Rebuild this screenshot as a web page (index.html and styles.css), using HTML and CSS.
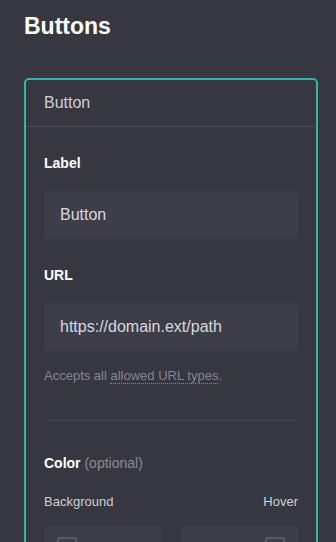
FILE: index.html
```html
<!doctype html>
<html lang="en">
<head>
    <meta charset="UTF-8">
    <meta name="viewport" content="width=device-width, initial-scale=1.0">
    <title>Buttons</title>
    <link rel="stylesheet" href="styles.css">
</head>
<body>
<div class="page">
    <h1 class="page__title">Buttons</h1>
    <div class="card">
        <div class="card__head">Button</div>
        <div class="card__body">
            <div class="field">
                <label class="field__label" for="label">Label</label>
                <input class="field__input" type="text" id="label" value="Button">
            </div>
            <div class="field field--hinted">
                <label class="field__label" for="url">URL</label>
                <input class="field__input" type="text" id="url" value="https://domain.ext/path">
                <p class="field__hint">Accepts all <span class="field__abbr">allowed URL types</span>.</p>
            </div>
            <hr class="card__sep">
            <div class="field">
                <div class="field__label">Color <span class="field__optional">(optional)</span></div>
                <div class="colors">
                    <span>Background</span>
                    <span>Hover</span>
                </div>
                <div class="colors__boxes">
                    <div class="colors__box">
                        <svg class="colors__icon" width="22" height="14" viewBox="0 0 22 14"><path d="M2 3h18M2 3v8M20 3v8" stroke="#5a5a68" stroke-width="2" fill="none"/></svg>
                    </div>
                    <div class="colors__box colors__box--right">
                        <svg class="colors__icon" width="22" height="14" viewBox="0 0 22 14"><path d="M2 3h18M2 3v8M20 3v8" stroke="#5a5a68" stroke-width="2" fill="none"/></svg>
                    </div>
                </div>
            </div>
        </div>
    </div>
</div>
</body>
</html>
```

FILE: styles.css
```css
body {
    margin: 0;
    background: #373742;
    font-family: "Liberation Sans", Arial, sans-serif;
    color: #fff;
}

.page {
    padding: 14px 18px 0 24px;
}

.page__title {
    margin: 0 0 39px 0;
    font-size: 23px;
    line-height: 25px;
    font-weight: bold;
}

.card {
    border: 2px solid #36b4a6;
    border-radius: 5px;
}

.card__head {
    padding: 13px 18px 13px 18px;
    font-size: 16px;
    line-height: 20px;
    color: #cfcfd4;
    border-bottom: 1px solid #4a4a56;
}

.card__body {
    padding: 28px 18px 0 18px;
}

.field {
    margin-bottom: 28px;
}

.field--hinted {
    margin-bottom: 36px;
}

.field__label {
    display: block;
    font-size: 14px;
    line-height: 16px;
    font-weight: bold;
    margin-bottom: 20px;
}

.field__optional {
    font-weight: normal;
    color: #8a8a96;
}

.field__input {
    box-sizing: border-box;
    display: block;
    width: 100%;
    height: 48px;
    padding: 0 16px;
    border: none;
    border-radius: 4px;
    background: #3e3e4b;
    color: #d8d8dd;
    font-family: inherit;
    font-size: 16px;
    outline: none;
}

.field__hint {
    margin: 17px 0 0 0;
    font-size: 13px;
    line-height: 16px;
    color: #858591;
}

.field__abbr {
    border-bottom: 1px dotted #858591;
}

.card__sep {
    margin: 0 0 34px 0;
    border: none;
    border-top: 1px solid #464652;
}

.colors {
    display: flex;
    justify-content: space-between;
    font-size: 13px;
    line-height: 16px;
    color: #cfcfd4;
    margin-top: 23px;
}

.colors__boxes {
    display: flex;
    gap: 20px;
    margin-top: 16px;
}

.colors__box {
    flex: 1;
    height: 48px;
    border-radius: 4px;
    background: #3e3e4b;
    padding: 9px 12px;
    box-sizing: border-box;
}

.colors__box--right {
    display: flex;
    justify-content: flex-end;
}
```
